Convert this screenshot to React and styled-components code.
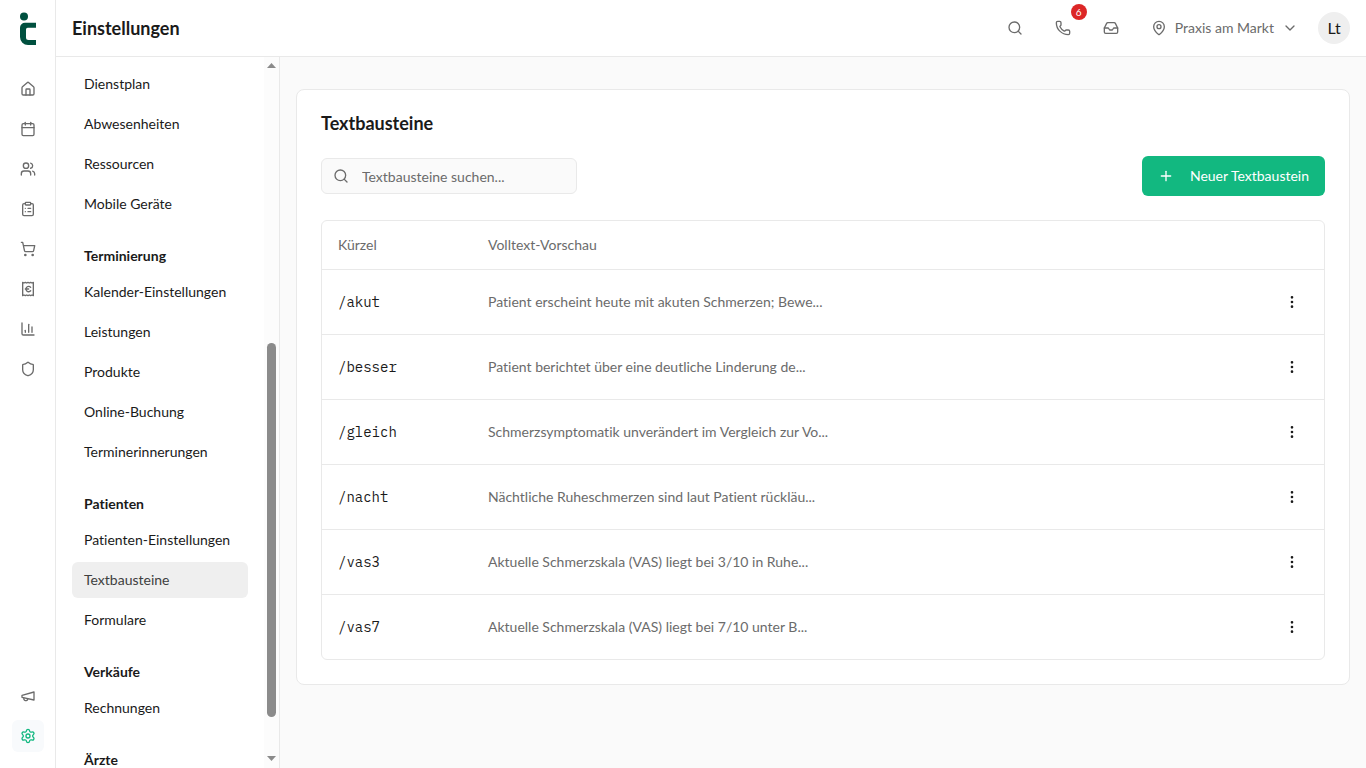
import React from "react";
import styled, { createGlobalStyle } from "styled-components";
import {
  House, Calendar, Users, ClipboardList, ShoppingCart, ReceiptEuro, ChartColumn,
  Shield, Settings, Search, Phone, Inbox, MapPin, ChevronDown, Plus, EllipsisVertical,
} from "lucide-react";

const colors = {
  text: "#1a1a1a",
  muted: "#6b6b6b",
  border: "#e9e9e9",
  surface: "#fafafa",
  accent: "#12b880",
  brand: "#00503f",
};

const GlobalStyle = createGlobalStyle`
  *, *::before, *::after { box-sizing: border-box; }
  body {
    margin: 0;
    font-family: Lato, "Noto Sans", sans-serif;
    font-size: 14px;
    line-height: 20px;
    font-variant-ligatures: none;
    color: ${colors.text};
    background: ${colors.surface};
  }
  button, input { font: inherit; font-variant-ligatures: none; color: inherit; }
  h1, h2, h3, ul { margin: 0; padding: 0; }
`;

const Shell = styled.div`
  display: flex;
  height: 100vh;
  overflow: hidden;
`;

const Rail = styled.aside`
  flex: none;
  width: 56px;
  display: flex;
  flex-direction: column;
  align-items: center;
  padding-bottom: 16px;
  background: #fff;
  border-right: 1px solid ${colors.border};
`;

const LogoLink = styled.a`
  display: flex;
  align-items: center;
  height: 57px;
`;

const RailNav = styled.nav`
  display: flex;
  flex-direction: column;
  gap: 8px;
  padding-top: 16px;
  ${(p) => p.$bottom && "margin-top: auto;"}
`;

const RailLink = styled.a`
  display: grid;
  place-items: center;
  width: 32px;
  height: 32px;
  border-radius: 6px;
  color: ${(p) => (p.$active ? colors.accent : colors.muted)};
  background: ${(p) => (p.$active ? "#f8fafc" : "transparent")};
`;

const Workspace = styled.div`
  flex: 1;
  min-width: 0;
  display: flex;
  flex-direction: column;
`;

const Header = styled.header`
  flex: none;
  display: flex;
  align-items: center;
  justify-content: space-between;
  height: 57px;
  padding: 0 16px;
  background: #fff;
  border-bottom: 1px solid ${colors.border};
`;

const PageTitle = styled.h1`
  font-size: 18px;
  line-height: 28px;
  font-weight: 700;
`;

const HeaderActions = styled.div`
  display: flex;
  align-items: center;
  gap: 8px;
`;

const IconButton = styled.button`
  position: relative;
  display: grid;
  place-items: center;
  width: ${(p) => p.$size || 40}px;
  height: ${(p) => p.$size || 40}px;
  padding: 0;
  border: 0;
  border-radius: 6px;
  background: transparent;
  color: ${(p) => (p.$dark ? colors.text : colors.muted)};
`;

const Badge = styled.span`
  position: absolute;
  top: -4px;
  right: -4px;
  width: 16px;
  height: 16px;
  border-radius: 50%;
  background: #dc2626;
  color: #fff;
  font-size: 10px;
  line-height: 16px;
  text-align: center;
`;

const LocationButton = styled.button`
  display: flex;
  align-items: center;
  gap: 8px;
  height: 40px;
  padding: 0 12px;
  border: 0;
  background: transparent;
  color: ${colors.muted};
`;

const Avatar = styled.button`
  width: 32px;
  height: 32px;
  padding: 0;
  border: 0;
  border-radius: 50%;
  background: #efefef;
  font-size: 16px;
`;

const Body = styled.div`
  flex: 1;
  min-height: 0;
  display: flex;
`;

const Sidebar = styled.aside`
  flex: none;
  width: 224px;
  display: flex;
  background: #fff;
  border-right: 1px solid ${colors.border};
`;

const SideNav = styled.nav`
  flex: 1;
  display: flex;
  flex-direction: column;
  gap: 24px;
  padding: 9px 16px 0;
  overflow: hidden;
`;

const GroupTitle = styled.h3`
  padding: 0 12px;
  margin-bottom: 8px;
  font-size: 14px;
  line-height: 20px;
  font-weight: 700;
`;

const GroupList = styled.ul`
  display: flex;
  flex-direction: column;
  gap: 4px;
  list-style: none;
`;

const SideLink = styled.a`
  display: block;
  padding: 8px 12px;
  border-radius: 6px;
  text-decoration: none;
  white-space: nowrap;
  color: ${(p) => (p.$active ? "#404040" : colors.text)};
  background: ${(p) => (p.$active ? "#efefef" : "transparent")};
`;

const ScrollBar = styled.div`
  flex: none;
  width: 15px;
  display: flex;
  flex-direction: column;
  align-items: center;
  background: #fcfcfc;
`;

const ScrollArrow = styled.svg`
  flex: none;
  width: 9px;
  height: 17px;
  fill: #8b8b8b;
`;

const ScrollSpace = styled.div`
  flex: ${(p) => p.$share} 0 0;
`;

const ScrollThumb = styled.div`
  flex: 374 0 0;
  width: 9px;
  border-radius: 5px;
  background: #8b8b8b;
`;

const Main = styled.main`
  flex: 1;
  min-width: 0;
  padding: 32px 16px;
  overflow: hidden;
`;

const Card = styled.section`
  display: flex;
  flex-direction: column;
  gap: 24px;
  padding: 24px;
  background: #fff;
  border: 1px solid ${colors.border};
  border-radius: 8px;
`;

const CardTitle = styled.h2`
  font-size: 18px;
  line-height: 18px;
  font-weight: 700;
`;

const Toolbar = styled.div`
  display: flex;
  align-items: center;
  justify-content: space-between;
`;

const SearchBox = styled.label`
  display: flex;
  align-items: center;
  gap: 13px;
  width: 256px;
  height: 36px;
  padding: 0 11px;
  border: 1px solid ${colors.border};
  border-radius: 6px;
  background: ${colors.surface};
  color: ${colors.muted};
  svg { flex: none; }
`;

const SearchInput = styled.input`
  flex: 1;
  min-width: 0;
  padding: 2px 0 0;
  border: 0;
  outline: 0;
  background: transparent;
  &::placeholder { color: ${colors.muted}; opacity: 1; }
`;

const PrimaryButton = styled.button`
  display: flex;
  align-items: center;
  gap: 16px;
  height: 40px;
  padding: 0 16px;
  border: 0;
  border-radius: 6px;
  background: ${colors.accent};
  color: #fff;
`;

const TableFrame = styled.div`
  border: 1px solid ${colors.border};
  border-radius: 6px;
  overflow: hidden;
`;

const Table = styled.table`
  width: 100%;
  table-layout: fixed;
  border-collapse: separate;
  border-spacing: 0;
  tbody tr:last-child td { border-bottom: 0; height: 64px; }
`;

const HeadCell = styled.th`
  width: ${(p) => p.$width || "auto"};
  height: 49px;
  padding: 0 16px;
  border-bottom: 1px solid ${colors.border};
  text-align: left;
  font-weight: 400;
  color: ${colors.muted};
`;

const Cell = styled.td`
  height: 65px;
  padding: 0 16px;
  border-bottom: 1px solid ${colors.border};
  color: ${(p) => (p.$code ? colors.text : colors.muted)};
  ${(p) => p.$code && `font-family: "IBM Plex Mono", "Liberation Mono", monospace;`}
`;

const railItems = [
  ["Start", House], ["Kalender", Calendar], ["Patienten", Users],
  ["Aufgaben", ClipboardList], ["Verkäufe", ShoppingCart],
  ["Rechnungen", ReceiptEuro], ["Statistik", ChartColumn], ["Sicherheit", Shield],
];

const groups = [
  { items: ["Dienstplan", "Abwesenheiten", "Ressourcen", "Mobile Geräte"] },
  {
    title: "Terminierung",
    items: ["Kalender-Einstellungen", "Leistungen", "Produkte", "Online-Buchung", "Terminerinnerungen"],
  },
  { title: "Patienten", items: ["Patienten-Einstellungen", "Textbausteine", "Formulare"] },
  { title: "Verkäufe", items: ["Rechnungen"] },
  { title: "Ärzte", items: [] },
];

const snippets = [
  ["/akut", "Patient erscheint heute mit akuten Schmerzen; Bewe..."],
  ["/besser", "Patient berichtet über eine deutliche Linderung de..."],
  ["/gleich", "Schmerzsymptomatik unverändert im Vergleich zur Vo..."],
  ["/nacht", "Nächtliche Ruheschmerzen sind laut Patient rückläu..."],
  ["/vas3", "Aktuelle Schmerzskala (VAS) liegt bei 3/10 in Ruhe..."],
  ["/vas7", "Aktuelle Schmerzskala (VAS) liegt bei 7/10 unter B..."],
];

const icon = { size: 16, strokeWidth: 2 };

function Logo() {
  return (
    <svg width="16" height="33" viewBox="0 0 16 33" fill={colors.brand} aria-hidden="true">
      <circle cx="4" cy="4.6" r="4" />
      <path d="M16 10.700H5a5 5 0 0 0-5 5V25A8 8 0 0 0 8 33H16v-5H8.500A2.500 2.500 0 0 1 6 25.500V17.500a1.700 1.700 0 0 1 1.700-1.700H16Z" />
    </svg>
  );
}

function Megaphone() {
  return (
    <svg width="16" height="16" viewBox="0 0 24 24" fill="none" stroke="currentColor"
      strokeWidth="2" strokeLinecap="round" strokeLinejoin="round" aria-hidden="true">
      <path d="m3 11 18-5v12L3 14v-3z" />
      <path d="M11.6 16.8a3 3 0 1 1-5.8-1.6" />
    </svg>
  );
}

export default function App() {
  return (
    <>
      <GlobalStyle />
      <Shell>
        <Rail>
          <LogoLink href="#" aria-label="Startseite"><Logo /></LogoLink>
          <RailNav aria-label="Hauptnavigation">
            {railItems.map(([label, Icon]) => (
              <RailLink key={label} href="#" aria-label={label}><Icon {...icon} /></RailLink>
            ))}
          </RailNav>
          <RailNav $bottom aria-label="System">
            <RailLink href="#" aria-label="Neuigkeiten"><Megaphone /></RailLink>
            <RailLink href="#" aria-label="Einstellungen" $active><Settings {...icon} /></RailLink>
          </RailNav>
        </Rail>
        <Workspace>
          <Header>
            <PageTitle>Einstellungen</PageTitle>
            <HeaderActions>
              <IconButton aria-label="Suche"><Search {...icon} /></IconButton>
              <IconButton aria-label="Anrufe"><Phone {...icon} /><Badge>6</Badge></IconButton>
              <IconButton aria-label="Posteingang"><Inbox {...icon} /></IconButton>
              <LocationButton>
                <MapPin {...icon} />
                Praxis am Markt
                <ChevronDown {...icon} />
              </LocationButton>
              <Avatar>Lt</Avatar>
            </HeaderActions>
          </Header>
          <Body>
            <Sidebar>
              <SideNav aria-label="Einstellungen">
                {groups.map((group) => (
                  <div key={group.title || "Praxis"}>
                    {group.title && <GroupTitle>{group.title}</GroupTitle>}
                    <GroupList>
                      {group.items.map((item) => (
                        <li key={item}>
                          <SideLink href="#" $active={item === "Textbausteine"}>{item}</SideLink>
                        </li>
                      ))}
                    </GroupList>
                  </div>
                ))}
              </SideNav>
              <ScrollBar aria-hidden="true">
                <ScrollArrow viewBox="0 0 9 17"><path d="M0 11h9L4.500 6Z" /></ScrollArrow>
                <ScrollSpace $share={269} />
                <ScrollThumb />
                <ScrollSpace $share={34} />
                <ScrollArrow viewBox="0 0 9 17"><path d="M0 5h9L4.500 10Z" /></ScrollArrow>
              </ScrollBar>
            </Sidebar>
            <Main>
              <Card>
                <CardTitle>Textbausteine</CardTitle>
                <Toolbar>
                  <SearchBox>
                    <Search {...icon} />
                    <SearchInput type="text" aria-label="Textbausteine suchen" placeholder="Textbausteine suchen..." />
                  </SearchBox>
                  <PrimaryButton><Plus {...icon} />Neuer Textbaustein</PrimaryButton>
                </Toolbar>
                <TableFrame>
                  <Table>
                    <thead>
                      <tr>
                        <HeadCell $width="150px">Kürzel</HeadCell>
                        <HeadCell>Volltext-Vorschau</HeadCell>
                        <HeadCell $width="64px" aria-label="Aktionen" />
                      </tr>
                    </thead>
                    <tbody>
                      {snippets.map(([code, preview]) => (
                        <tr key={code}>
                          <Cell $code>{code}</Cell>
                          <Cell>{preview}</Cell>
                          <Cell>
                            <IconButton $size={32} $dark aria-label={`Aktionen für ${code}`}>
                              <EllipsisVertical size={16} />
                            </IconButton>
                          </Cell>
                        </tr>
                      ))}
                    </tbody>
                  </Table>
                </TableFrame>
              </Card>
            </Main>
          </Body>
        </Workspace>
      </Shell>
    </>
  );
}
